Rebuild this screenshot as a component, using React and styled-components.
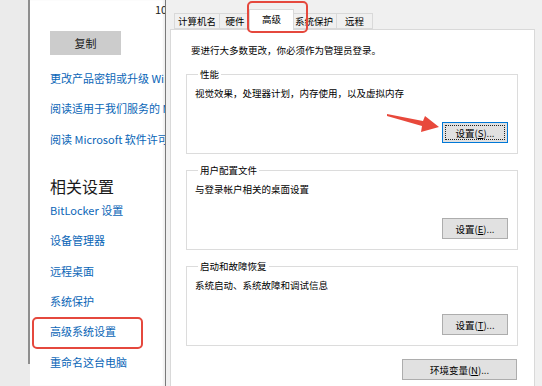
import styled, { createGlobalStyle } from "styled-components";

const GlobalStyle = createGlobalStyle`
  html, body {
    margin: 0;
    padding: 0;
    background: #f0f0f0;
  }
  body {
    font-family: "Noto Sans CJK SC", "Noto Sans", sans-serif;
  }
`;

const App = () => {
  return (
    <>
      <GlobalStyle />
      <Screen>
        <Strip>
          <StripLine />
        </Strip>
        <SettingsPanel>
          <InfoRow>
            <InfoLabel>版本</InfoLabel>
            <InfoValue>
              <span>19044.1826</span>
              <span>10.0.19044</span>
            </InfoValue>
          </InfoRow>
          <CopyButton>复制</CopyButton>
          <LinkList top={15}>
            <LinkItem>更改产品密钥或升级 Windows</LinkItem>
            <LinkItem>阅读适用于我们服务的 Microsoft 服务协议</LinkItem>
            <LinkItem>阅读 Microsoft 软件许可条款</LinkItem>
          </LinkList>
          <SectionTitle>相关设置</SectionTitle>
          <LinkList top={5}>
            <LinkItem>BitLocker 设置</LinkItem>
            <LinkItem>设备管理器</LinkItem>
            <LinkItem>远程桌面</LinkItem>
            <LinkItem>系统保护</LinkItem>
            <LinkItem highlight>高级系统设置</LinkItem>
            <LinkItem>重命名这台电脑</LinkItem>
          </LinkList>
        </SettingsPanel>
        <Divider />
        <Dialog>
          <TabBar>
            <Tab w={46}>计算机名</Tab>
            <Tab w={32}>硬件</Tab>
            <Tab w={41} active>
              高级
            </Tab>
            <Tab w={46}>系统保护</Tab>
            <Tab w={37}>远程</Tab>
          </TabBar>
          <Pane>
            <Notice>要进行大多数更改，你必须作为管理员登录。</Notice>
            <Group>
              <legend>性能</legend>
              <GroupText>视觉效果，处理器计划，内存使用，以及虚拟内存</GroupText>
              <DlgButton focused>
                设置(<u>S</u>)...
              </DlgButton>
            </Group>
            <Group>
              <legend>用户配置文件</legend>
              <GroupText>与登录帐户相关的桌面设置</GroupText>
              <DlgButton>
                设置(<u>E</u>)...
              </DlgButton>
            </Group>
            <Group>
              <legend>启动和故障恢复</legend>
              <GroupText>系统启动、系统故障和调试信息</GroupText>
              <DlgButton>
                设置(<u>T</u>)...
              </DlgButton>
            </Group>
            <EnvButton>
              环境变量(<u>N</u>)...
            </EnvButton>
          </Pane>
          <Arrow width="56" height="26" viewBox="0 0 56 26">
            <polygon
              points="1,4 37,11 39,6 53,17 35,22 36,16 1,6"
              fill="#e8483b"
            />
          </Arrow>
        </Dialog>
      </Screen>
    </>
  );
};

const Screen = styled.div`
  display: flex;
  width: 542px;
  height: 386px;
  overflow: hidden;
`;

const Strip = styled.div`
  width: 30px;
  flex-shrink: 0;
  background: #ebebeb;
  display: flex;
  justify-content: flex-end;
  align-items: flex-start;
`;

const StripLine = styled.div`
  width: 2px;
  height: 364px;
  background: #8e8e8e;
`;

const SettingsPanel = styled.div`
  position: relative;
  width: 135px;
  flex-shrink: 0;
  background: #fff;
  padding-left: 20px;
  box-sizing: border-box;
  overflow: hidden;
  white-space: nowrap;
  font-size: 11px;
  box-shadow: inset -2px 0 2px rgba(0, 0, 0, 0.06);
`;

const InfoRow = styled.div`
  display: flex;
  margin-top: -15px;
  line-height: 16px;
  color: #1a1a1a;
`;

const InfoLabel = styled.span`
  width: 105px;
  flex-shrink: 0;
`;

const InfoValue = styled.span`
  display: flex;
  flex-direction: column;
`;

const CopyButton = styled.div`
  width: 71px;
  height: 24px;
  margin-top: 14px;
  background: #cccccc;
  color: #1a1a1a;
  display: flex;
  align-items: center;
  justify-content: center;
`;

const LinkList = styled.div`
  display: flex;
  flex-direction: column;
  gap: 14.4px;
  margin-top: ${({ top }) => top}px;
`;

const LinkItem = styled.div`
  position: relative;
  color: #0a66b7;
  line-height: 16px;

  ${({ highlight }) =>
    highlight &&
    `
    &::after {
      content: "";
      position: absolute;
      left: -18px;
      top: -6px;
      width: 111px;
      height: 32px;
      box-sizing: border-box;
      border: 2.5px solid #e5483d;
      border-radius: 5px;
    }
  `}
`;

const SectionTitle = styled.div`
  margin-top: 28px;
  font-size: 16px;
  line-height: 22px;
  color: #1a1a1a;
`;

const Divider = styled.div`
  width: 1px;
  flex-shrink: 0;
  background: #7a7a7a;
`;

const Dialog = styled.div`
  position: relative;
  flex: 1;
  background: #f0f0f0;
  padding: 0 7px 0 4px;
  font-size: 9.5px;
  color: #000;
`;

const TabBar = styled.div`
  display: flex;
  align-items: flex-end;
  height: 29px;
  padding-left: 4px;
  position: relative;
  z-index: 1;
`;

const Tab = styled.div`
  position: relative;
  box-sizing: border-box;
  width: ${({ w, active }) => (active ? w + 4 : w)}px;
  height: ${({ active }) => (active ? 21 : 16)}px;
  margin: ${({ active }) => (active ? "0 -2px -1px" : "0 0 0 -1px")};
  padding-bottom: ${({ active }) => (active ? 3 : 0)}px;
  background: ${({ active }) => (active ? "#fff" : "#f0f0f0")};
  border: 1px solid #d9d9d9;
  border-bottom: ${({ active }) => (active ? "none" : "1px solid #d9d9d9")};
  display: flex;
  align-items: center;
  justify-content: center;
  z-index: ${({ active }) => (active ? 2 : 0)};

  &:first-child {
    margin-left: 0;
  }

  ${({ active }) =>
    active &&
    `
    &::after {
      content: "";
      position: absolute;
      left: -3px;
      top: -9px;
      width: 61px;
      height: 32px;
      box-sizing: border-box;
      border: 2.5px solid #e5483d;
      border-radius: 5px;
    }
  `}
`;

const Pane = styled.div`
  height: 400px;
  background: #fff;
  border: 1px solid #d9d9d9;
  padding: 13px 16px 0 15px;
  display: flex;
  flex-direction: column;
`;

const Notice = styled.div`
  line-height: 14px;
  padding-left: 5px;
  margin-bottom: 11px;
`;

const Group = styled.fieldset`
  margin: 0 0 10px;
  padding: 0 9px 10px 8px;
  border: 1px solid #dcdcdc;
  display: flex;
  flex-direction: column;
  min-width: 0;

  legend {
    padding: 0 2px;
    margin-left: 3px;
    line-height: 12px;
  }
`;

const GroupText = styled.div`
  margin-top: 6px;
  line-height: 14px;
`;

const DlgButton = styled.div`
  align-self: flex-end;
  margin-top: 22px;
  width: 66px;
  height: 21px;
  box-sizing: border-box;
  background: #e1e1e1;
  border: 1px solid ${({ focused }) => (focused ? "#0078d7" : "#adadad")};
  outline: ${({ focused }) => (focused ? "1px dotted #222" : "none")};
  outline-offset: -4px;
  display: flex;
  align-items: center;
  justify-content: center;
`;

const EnvButton = styled(DlgButton)`
  margin-top: 3px;
  margin-right: 1px;
  width: 115px;
`;

const Arrow = styled.svg`
  position: absolute;
  left: 220px;
  top: 110px;
  z-index: 3;
`;

export default App;
